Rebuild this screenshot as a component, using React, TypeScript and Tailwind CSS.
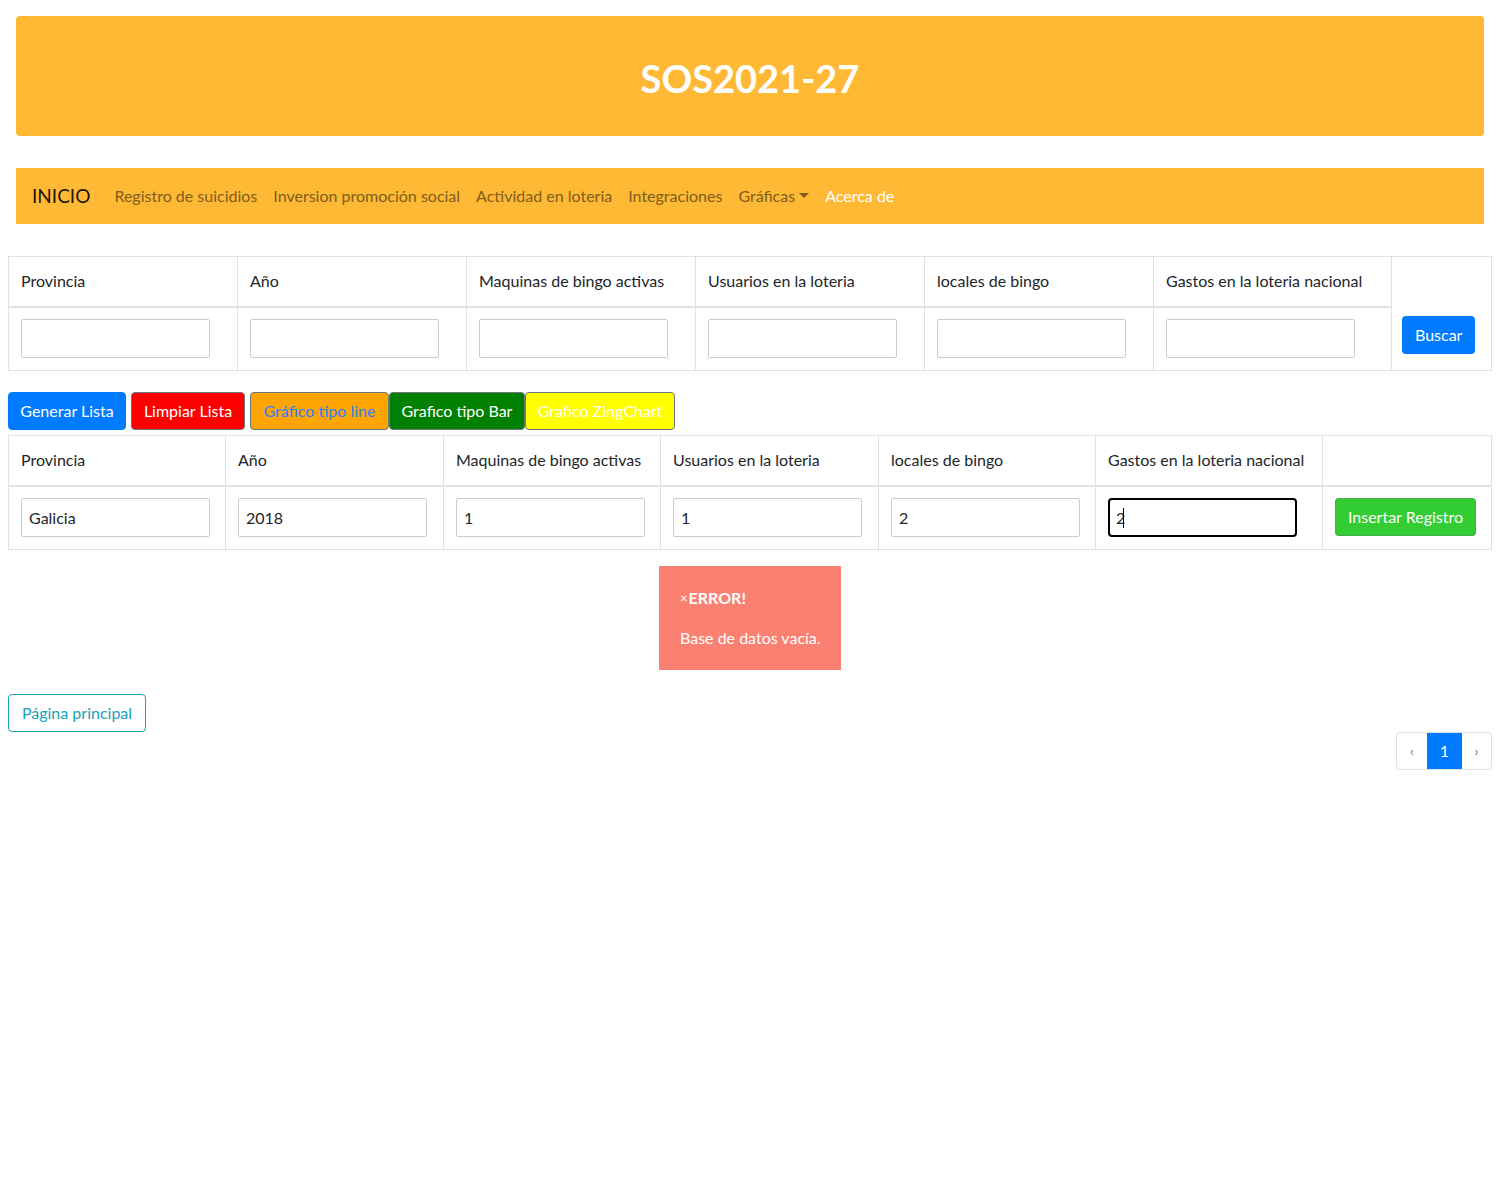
import React from "react";

const font = { fontFamily: "Lato, 'Segoe UI', 'Liberation Sans', sans-serif" };

const navLinks = ["Registro de suicidios", "Inversion promoción social", "Actividad en loteria", "Integraciones"];

const cols = ["Provincia", "Año", "Maquinas de bingo activas", "Usuarios en la loteria", "locales de bingo", "Gastos en la loteria nacional"];

function Field({ value = "", focused = false }: { value?: string; focused?: boolean }) {
  if (focused) {
    return (
      <div className="w-[189px] h-[39px] px-[6px] rounded-[4px] border-2 border-black bg-white flex items-center">
        <span>{value}</span>
        <span className="w-px h-[20px] bg-black -ml-[2px]"></span>
      </div>
    );
  }
  return (
    <input
      readOnly
      value={value}
      className="block w-[189px] h-[39px] px-[7px] rounded-[2px] border border-[#ccc] text-[16px] text-[#212529] outline-none bg-white"
    />
  );
}

export default function App() {
  const searchWidths = ["w-[229px]", "w-[229px]", "w-[229px]", "w-[229px]", "w-[229px]", "w-[238px]"];
  const insertWidths = ["w-[217px]", "w-[218px]", "w-[217px]", "w-[218px]", "w-[217px]", "w-[227px]"];
  const values = ["Galicia", "2018", "1", "1", "2", "2"];

  return (
    <div className="min-h-[1200px] bg-white text-[#212529] text-[16px] leading-6" style={font}>
      <header className="mx-4 pt-4">
        <div className="h-[120px] rounded-[4px] bg-[#ffb935] flex items-center justify-center">
          <h1 className="text-[38px] leading-[48px] font-bold text-white mt-[4px]">SOS2021-27</h1>
        </div>
      </header>

      <nav className="mx-4 mt-8 h-14 bg-[#ffb935] flex items-center px-4">
        <span className="text-[19px] text-black/90 mr-4">INICIO</span>
        {navLinks.map((l) => (
          <span key={l} className="px-2 text-[#805d1b]">{l}</span>
        ))}
        <span className="px-2 text-[#805d1b] flex items-center">
          Gráficas
          <svg width="10" height="6" viewBox="0 0 10 6" className="ml-[4px]">
            <path d="M0 0h10L5 5z" fill="#805d1b" />
          </svg>
        </span>
        <span className="px-2 text-white">Acerca de</span>
      </nav>

      <div className="px-2 mt-8">
        <table className="w-[1484px] border-collapse border border-[#dee2e6] table-fixed">
          <thead>
            <tr>
              {cols.map((c, i) => (
                <th key={c} className={`${searchWidths[i]} h-[50px] px-3 text-left font-normal align-bottom pb-[13px] border border-[#dee2e6] border-b-2`}>
                  {c}
                </th>
              ))}
              <th className="w-[100px] border-t border-[#dee2e6]"></th>
            </tr>
          </thead>
          <tbody>
            <tr>
              {cols.map((c) => (
                <td key={c} className="h-[64px] px-3 align-middle border border-[#dee2e6]">
                  <Field />
                </td>
              ))}
              <td className="px-[10px] align-middle border-b border-[#dee2e6]">
                <button className="h-[38px] px-[13px] rounded-[4px] bg-[#007bff] text-white -mt-[6px]">Buscar</button>
              </td>
            </tr>
          </tbody>
        </table>

        <div className="flex mt-[21px]">
          <button className="h-[38px] w-[118px] rounded-[4px] bg-[#007bff] text-white border border-[#007bff]">Generar Lista</button>
          <button className="h-[38px] w-[114px] ml-[5px] rounded-[4px] bg-[#ff0000] text-white border border-[#6c757d]">Limpiar Lista</button>
          <button className="h-[38px] w-[139px] ml-[5px] rounded-[4px] bg-[#ffa500] text-[#2f7fff] border border-[#6c757d]">Gráfico tipo line</button>
          <button className="h-[38px] w-[136px] rounded-[4px] bg-[#008000] text-white border border-[#6c757d]">Grafico tipo Bar</button>
          <button className="h-[38px] w-[150px] rounded-[4px] bg-[#ffff00] text-white border border-[#6c757d]">Grafico ZingChart</button>
        </div>

        <table className="w-[1484px] mt-[5px] border-collapse border border-[#dee2e6] table-fixed">
          <thead>
            <tr>
              {cols.map((c, i) => (
                <th key={c} className={`${insertWidths[i]} h-[50px] px-3 text-left font-normal align-bottom pb-[13px] border border-[#dee2e6] border-b-2`}>
                  {c}
                </th>
              ))}
              <th className="w-[169px] border border-[#dee2e6] border-b-2"></th>
            </tr>
          </thead>
          <tbody>
            <tr>
              {values.map((v, i) => (
                <td key={i} className="h-[64px] px-3 align-middle border border-[#dee2e6]">
                  <Field value={v} focused={i === 5} />
                </td>
              ))}
              <td className="px-3 align-middle border border-[#dee2e6]">
                <button className="h-[38px] w-[141px] rounded-[4px] bg-[#32cd32] text-white border border-[#6c757d]/40 -mt-[2px]">Insertar Registro</button>
              </td>
            </tr>
          </tbody>
        </table>

        <div className="flex justify-center mt-4">
          <div className="w-[182px] h-[104px] bg-[#fa8072] text-white pl-[21px] pt-[20px]">
            <div className="flex items-center h-6">
              <span className="text-[13px] mr-[1px]">×</span>
              <span className="font-bold">ERROR!</span>
            </div>
            <div className="mt-4">Base de datos vacía.</div>
          </div>
        </div>

        <div className="mt-6">
          <button className="h-[38px] w-[138px] rounded-[4px] border border-[#17a2b8] text-[#17a2b8] bg-white">Página principal</button>
        </div>

        <div className="flex justify-end">
          <div className="flex h-[38px] rounded-[4px] border border-[#dee2e6] overflow-hidden text-[14px]">
            <span className="w-[30px] flex items-center justify-center text-[#6c757d]">‹</span>
            <span className="w-[35px] flex items-center justify-center bg-[#007bff] text-white text-[16px]">1</span>
            <span className="w-[29px] flex items-center justify-center text-[#6c757d]">›</span>
          </div>
        </div>
      </div>
    </div>
  );
}
